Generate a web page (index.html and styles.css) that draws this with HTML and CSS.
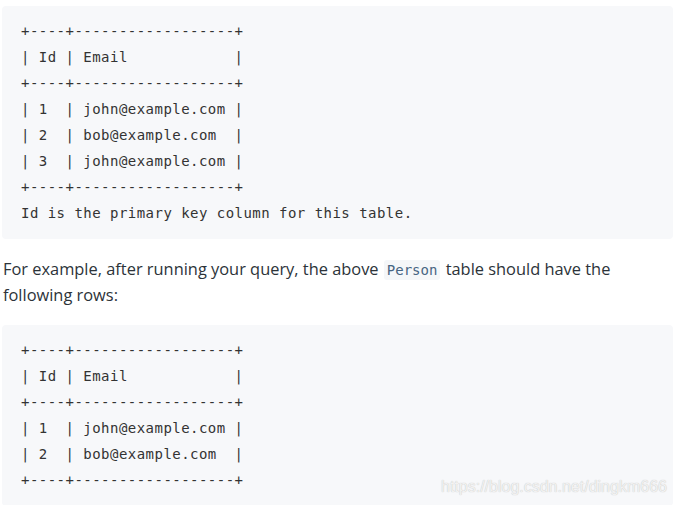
FILE: index.html
```html
<!DOCTYPE html>
<html>
<head>
<meta charset="utf-8">
<link rel="stylesheet" href="styles.css">
</head>
<body>
<div class="page">
<pre class="code">+----+------------------+
| Id | Email            |
+----+------------------+
| 1  | john@example.com |
| 2  | bob@example.com  |
| 3  | john@example.com |
+----+------------------+
Id is the primary key column for this table.</pre>
<p class="text"><span>For example, after running your query, the above </span><code class="inline">Person</code><span> table should have the following rows:</span></p>
<pre class="code">+----+------------------+
| Id | Email            |
+----+------------------+
| 1  | john@example.com |
| 2  | bob@example.com  |
+----+------------------+</pre>
</div>
<div class="watermark">https://blog.csdn.net/dingkm666</div>
</body>
</html>
```
FILE: styles.css
```css
html, body {
  margin: 0;
  padding: 0;
  background: #ffffff;
}
.page {
  padding: 6px 1px 0 2px;
}
.code {
  margin: 0;
  background: #f7f8fa;
  border-radius: 4px;
  padding: 12px 19px 13px 19px;
  font-family: "DejaVu Sans Mono", monospace;
  font-size: 14px;
  letter-spacing: 0.47px;
  line-height: 26px;
  color: #333333;
}
.text {
  margin: 17px 0 17px 1px;
  font-family: "Open Sans", sans-serif;
  font-size: 16.4px;
  line-height: 26px;
  color: #2c3339;
}
.inline {
  display: inline-block;
  font-family: "DejaVu Sans Mono", monospace;
  font-size: 14px;
  line-height: 20px;
  background: #f5f7f9;
  color: #476582;
  padding: 0 3px;
  margin: 0 1px;
  border-radius: 3px;
}
.watermark {
  position: absolute;
  left: 441px;
  top: 478px;
  font-family: "Liberation Sans", sans-serif;
  font-size: 16px;
  color: #f2f2f2;
  text-shadow: 0 0 1px #b8b8b8;
}
```
